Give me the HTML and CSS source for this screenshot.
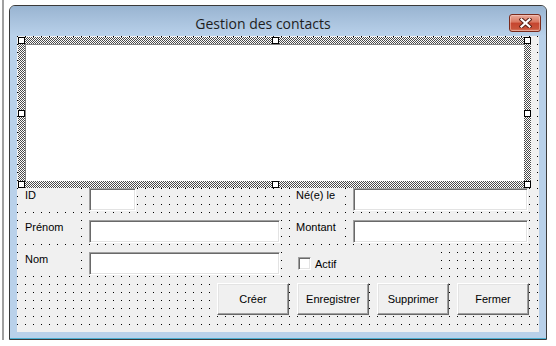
FILE: index.html
```html
<!DOCTYPE html>
<html lang="fr">
<head>
    <meta charset="UTF-8">
    <meta name="viewport" content="width=device-width, initial-scale=1.0">
    <title>Gestion des contacts</title>
    <link rel="stylesheet" href="styles.css">
</head>
<body>
    <div class="desktop">
        <div class="window">
            <div class="titlebar">
                <div class="title">Gestion des contacts</div>
                <button class="close" type="button" aria-label="Fermer">
                    <svg width="13" height="10" viewBox="0 0 13 10">
                        <path d="M2.5 1.5 L10.5 8.5 M10.5 1.5 L2.5 8.5" stroke="#5b2016" stroke-width="4.2" stroke-linecap="square" fill="none"/>
                        <path d="M2.5 1.5 L10.5 8.5 M10.5 1.5 L2.5 8.5" stroke="#fff" stroke-width="2.2" stroke-linecap="square" fill="none"/>
                    </svg>
                </button>
            </div>

            <div class="client">
                <!-- liste des contacts (sélectionnée dans l'éditeur) -->
                <div class="selection">
                    <div class="listbox"></div>
                    <span class="handle h-tl"></span>
                    <span class="handle h-tc"></span>
                    <span class="handle h-tr"></span>
                    <span class="handle h-ml"></span>
                    <span class="handle h-mr"></span>
                    <span class="handle h-bl"></span>
                    <span class="handle h-bc"></span>
                    <span class="handle h-br"></span>
                </div>

                <div class="form">
                    <label class="lbl">ID</label>
                    <input class="field field-id" type="text">
                    <label class="lbl lbl-r">Né(e) le</label>
                    <input class="field" type="text">

                    <label class="lbl">Prénom</label>
                    <input class="field" type="text">
                    <label class="lbl lbl-r">Montant</label>
                    <input class="field" type="text">

                    <label class="lbl">Nom</label>
                    <input class="field" type="text">
                    <label class="check">
                        <span class="box"></span>
                        <span>Actif</span>
                    </label>
                </div>

                <div class="buttons">
                    <button class="btn" type="button">Créer</button>
                    <button class="btn" type="button">Enregistrer</button>
                    <button class="btn" type="button">Supprimer</button>
                    <button class="btn" type="button">Fermer</button>
                </div>
            </div>
        </div>
    </div>
</body>
</html>
```

FILE: styles.css
```css
body {
    margin: 0;
    background-color: #fff;
    font-family: "Liberation Sans", Arial, sans-serif;
    font-size: 11px;
    color: #000;
}
.desktop {
    margin-left: 2px;
    border-left: 2px solid #a0a0a0;
    padding: 5px 0 0 5px;
    height: 335px;
}
.window {
    width: 538px;
    box-sizing: border-box;
    border: 1px solid #3a3a3a;
    border-radius: 6px 6px 0 0;
    background-color: #b9d1ea;
    padding: 0 7px 7px;
    box-shadow: inset 0 -1px #4cb0d3;
}
.titlebar {
    margin: 0 -7px;
    height: 30px;
    box-sizing: border-box;
    padding-top: 8px;
    display: flex;
    align-items: flex-start;
    border-radius: 5px 5px 0 0;
    background: linear-gradient(#99b4d1, #b9d1ea);
}
.title {
    flex: 1;
    padding-left: 7px;
    text-align: center;
    font-family: "Open Sans", sans-serif;
    font-size: 14px;
    line-height: 19px;
    color: #1e1e1e;
}
.close {
    width: 32px;
    height: 18px;
    margin-right: 5px;
    padding: 0;
    display: flex;
    align-items: center;
    justify-content: center;
    border: 1px solid #7a2b1d;
    border-radius: 3px;
    background: linear-gradient(#e9ab9c, #d9765f 45%, #c5452f 50%, #c9543b 85%, #d8826a);
    box-shadow: inset 0 0 0 1px rgba(255, 220, 210, 0.45);
}
.client {
    height: 296px;
    box-sizing: border-box;
    padding-top: 1px;
    background-color: #f0f0f0;
    background-image: conic-gradient(from 270deg at 1px 1px, #000 25%, transparent 0);
    background-size: 8px 8px;
}
.selection {
    position: relative;
    margin-left: 1px;
    width: 513px;
    height: 151px;
    box-sizing: border-box;
    padding: 7px;
    background: repeating-conic-gradient(#4a4a4a 0 25%, #fff 0 50%) 0 0 / 2px 2px;
}
.listbox {
    height: 100%;
    background-color: #fff;
    box-shadow: inset 1px 1px #828282;
}
.handle {
    position: absolute;
    width: 7px;
    height: 7px;
    box-sizing: border-box;
    border: 1px solid #000;
    background-color: #fff;
}
.h-tl, .h-tc, .h-tr { top: 0; }
.h-ml, .h-mr { top: calc(50% - 3px); }
.h-bl, .h-bc, .h-br { bottom: 0; }
.h-tl, .h-ml, .h-bl { left: 0; }
.h-tc, .h-bc { left: calc(50% - 3px); }
.h-tr, .h-mr, .h-br { right: 0; }
.form {
    display: grid;
    grid-template-columns: 62px 191px 57px 175px;
    grid-template-rows: repeat(3, 23px);
    column-gap: 8px;
    row-gap: 9px;
    padding-left: 2px;
}
.lbl {
    height: 22px;
    box-sizing: border-box;
    padding: 1px 0 0 6px;
    line-height: 13px;
    background-color: #f0f0f0;
}
.lbl-r {
    margin-left: 2px;
}
.field {
    width: 100%;
    height: 23px;
    box-sizing: border-box;
    margin: 0;
    padding: 0 3px;
    font: inherit;
    border: 1px solid;
    border-color: #a0a0a0 #fff #fff #a0a0a0;
    box-shadow: inset 1px 1px #696969, inset -1px -1px #e3e3e3;
    background-color: #fff;
    outline: none;
}
.field-id {
    width: 47px;
}
.check {
    grid-column: 3 / 5;
    justify-self: start;
    width: 152px;
    box-sizing: border-box;
    padding-left: 10px;
    display: flex;
    align-items: center;
    gap: 4px;
    background-color: #f0f0f0;
}
.box {
    width: 13px;
    height: 13px;
    box-sizing: border-box;
    border: 1px solid;
    border-color: #a0a0a0 #fff #fff #a0a0a0;
    box-shadow: inset 1px 1px #696969, inset -1px -1px #e3e3e3;
    background-color: #fff;
}
.buttons {
    display: flex;
    justify-content: flex-end;
    gap: 8px;
    margin-top: 8px;
    padding-right: 10px;
}
.btn {
    width: 72px;
    height: 32px;
    padding: 0;
    font: inherit;
    color: #000;
    background-color: #f0f0f0;
    border: 1px solid;
    border-color: #fff #696969 #696969 #fff;
    box-shadow: inset -1px -1px #a0a0a0, inset 1px 1px #e3e3e3;
}
```
